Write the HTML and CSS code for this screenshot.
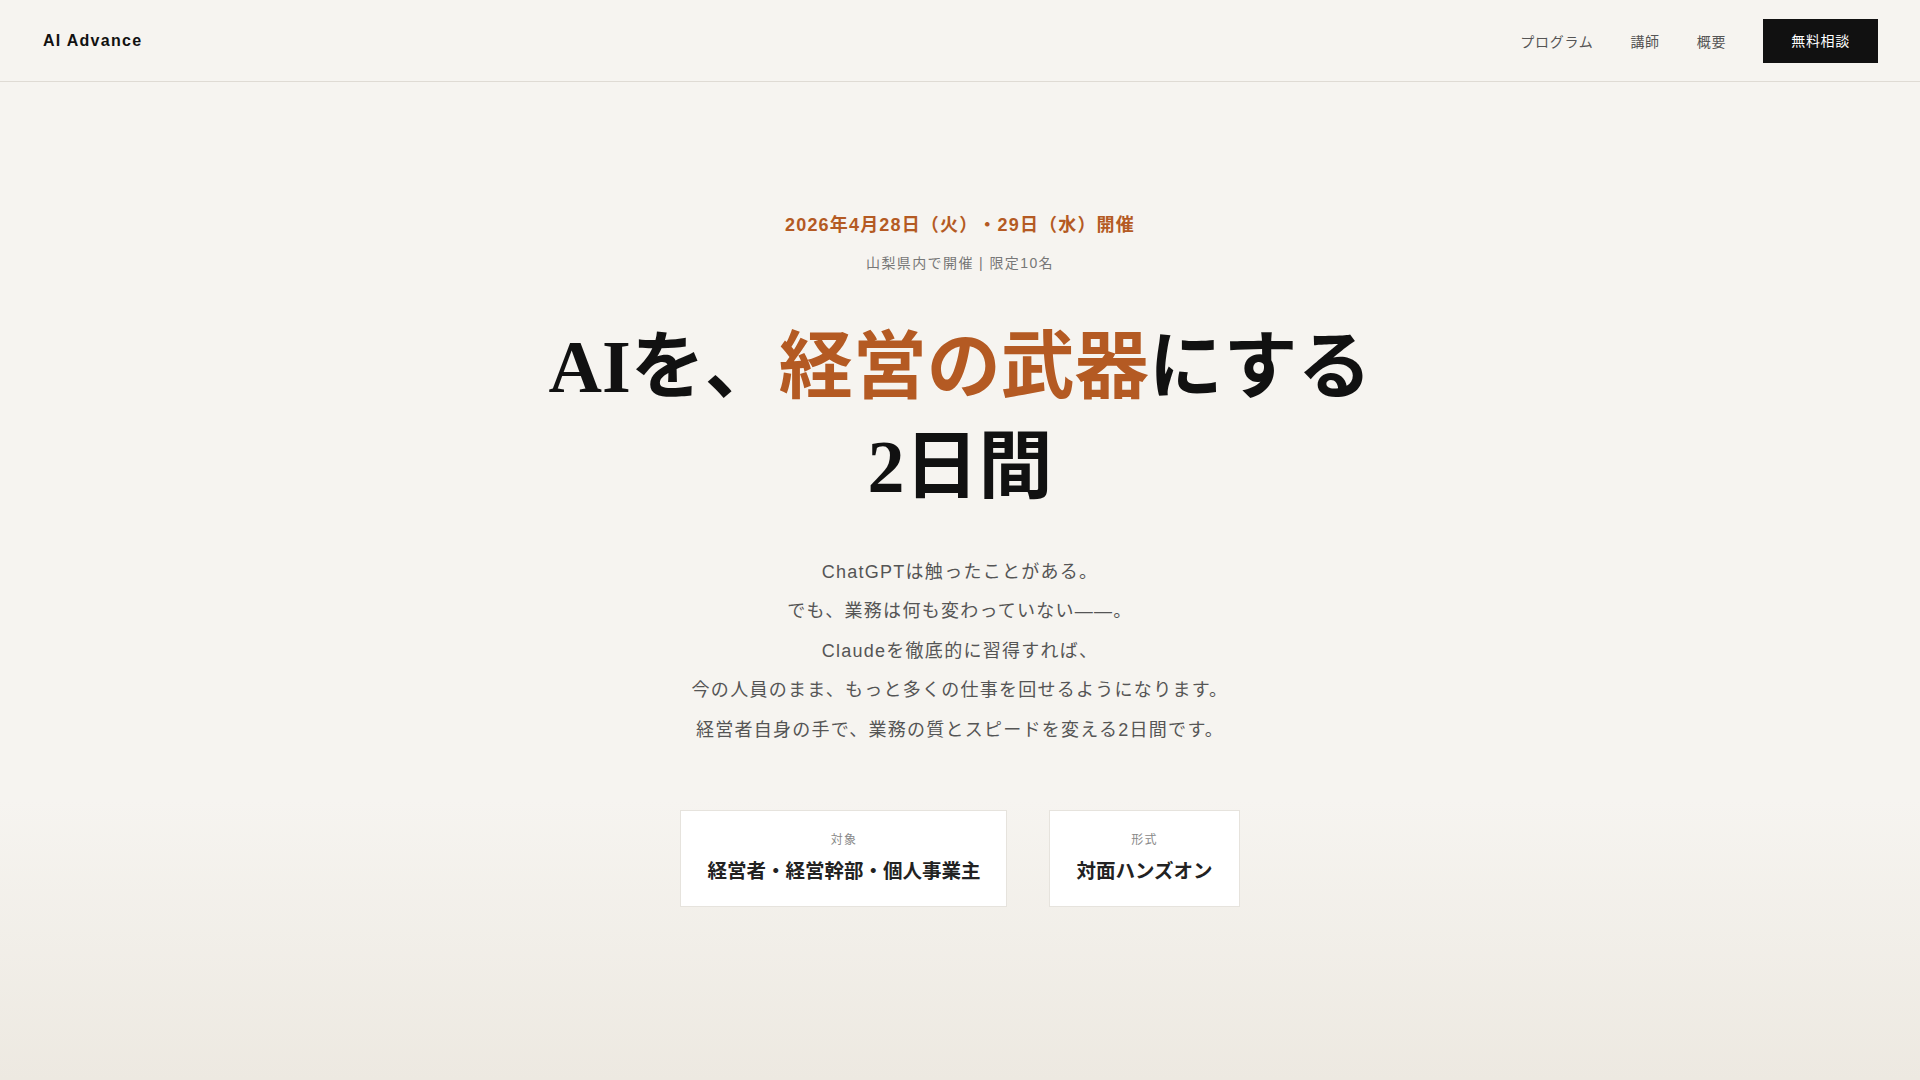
FILE: index.html
```html
<!DOCTYPE html>
<html lang="ja">
<head>
<meta charset="utf-8">
<title>AI Advance</title>
<link rel="stylesheet" href="styles.css">
</head>
<body>
<header class="site-header">
  <div class="logo">AI Advance</div>
  <nav class="nav">
    <a class="nav-link" href="#">プログラム</a>
    <a class="nav-link" href="#">講師</a>
    <a class="nav-link" href="#">概要</a>
    <a class="nav-cta" href="#">無料相談</a>
  </nav>
</header>
<main class="hero">
  <p class="hero-date">2026年4月28日（火）・29日（水）開催</p>
  <p class="hero-place">山梨県内で開催 | 限定10名</p>
  <h1 class="hero-title">AIを、<span class="accent">経営の武器</span>にする<br>2日間</h1>
  <div class="hero-lead">
    <p>ChatGPTは触ったことがある。</p>
    <p>でも、業務は何も変わっていない——。</p>
    <p>Claudeを徹底的に習得すれば、</p>
    <p>今の人員のまま、もっと多くの仕事を回せるようになります。</p>
    <p>経営者自身の手で、業務の質とスピードを変える2日間です。</p>
  </div>
  <div class="cards">
    <div class="card">
      <div class="card-label">対象</div>
      <div class="card-value">経営者・経営幹部・個人事業主</div>
    </div>
    <div class="card">
      <div class="card-label">形式</div>
      <div class="card-value">対面ハンズオン</div>
    </div>
  </div>
</main>
</body>
</html>
```
FILE: styles.css
```css
* { box-sizing: border-box; }
html, body { margin: 0; padding: 0; }
body {
  font-family: "Liberation Sans", "Noto Sans CJK JP", sans-serif;
  background: #f6f4f0;
  color: #111;
  min-height: 1080px;
  text-spacing-trim: space-all;
}
p { margin: 0; }
a { text-decoration: none; }

.site-header {
  height: 82px;
  display: flex;
  align-items: center;
  justify-content: space-between;
  padding: 0 42px 0 43px;
  border-bottom: 1px solid #dfdbd4;
}
.logo {
  font-size: 16px;
  font-weight: 700;
  letter-spacing: 0.08em;
  color: #111;
}
.nav {
  display: flex;
  align-items: center;
  gap: 37px;
}
.nav-link {
  font-size: 14px;
  letter-spacing: 0.05em;
  color: #555;
}
.nav-cta {
  display: block;
  background: #111;
  color: #fff;
  font-size: 14px;
  line-height: 20px;
  letter-spacing: 0.05em;
  padding: 12px 28px;
}

.hero {
  display: flex;
  flex-direction: column;
  align-items: center;
  text-align: center;
  padding-top: 130px;
  min-height: 998px;
  background: linear-gradient(to bottom, #f6f4f0 0%, #f6f4f0 72%, #ede9e1 100%);
}
.hero-date {
  font-size: 18px;
  line-height: 27px;
  font-weight: 700;
  letter-spacing: 0.065em;
  color: #b45a23;
}
.hero-place {
  margin-top: 14px;
  font-size: 14px;
  line-height: 21px;
  letter-spacing: 0.1em;
  color: #777;
}
.hero-title {
  margin: 43px 0 0;
  font-family: "Liberation Serif", "Noto Sans CJK JP", serif;
  font-weight: 700;
  font-size: 74px;
  line-height: 100px;
  color: #111;
}
.accent { color: #b45a23; }
.hero-lead {
  margin-top: 36px;
  font-size: 18px;
  line-height: 39.4px;
  letter-spacing: 0.07em;
  color: #555;
}
.cards {
  display: flex;
  gap: 42px;
  margin-top: 60px;
}
.card {
  background: #fff;
  border: 1px solid #e6e3dd;
  padding: 20px 26px;
}
.card-label {
  font-size: 12px;
  line-height: 18px;
  letter-spacing: 0.1em;
  color: #888;
}
.card-value {
  margin-top: 8px;
  font-size: 19.5px;
  line-height: 29px;
  font-weight: 700;
  color: #222;
}
```
